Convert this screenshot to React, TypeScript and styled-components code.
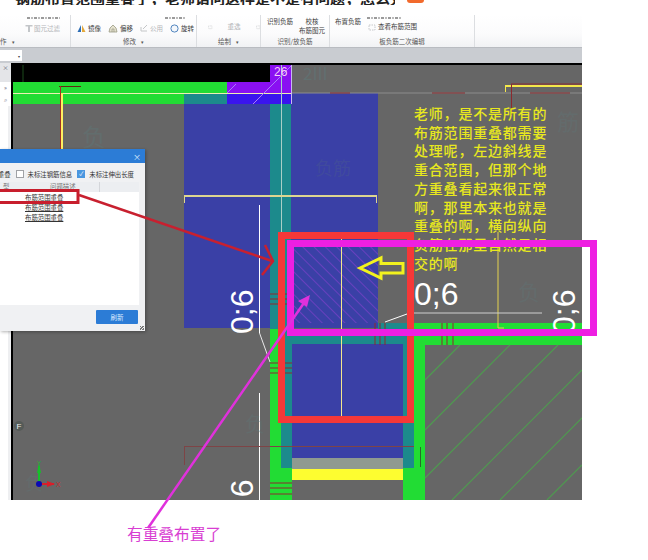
import * as React from "react";
import styled, { createGlobalStyle } from "styled-components";

const CJK = `"Noto Sans CJK SC", "Liberation Sans", sans-serif`;

const GlobalStyle = createGlobalStyle`
  html, body {
    margin: 0;
    background: #fff;
    font-family: ${CJK};
  }
`;

const Page = styled.div`
  position: relative;
  width: 648px;
  height: 560px;
  overflow: hidden;
  background: #fff;
`;

const TitleBar = styled.div`
  display: flex;
  height: 15px;
  padding-left: 15px;
  overflow: hidden;
`;

const TitleText = styled.div`
  width: 380px;
  height: 15px;
  margin-top: -10px;
  font-size: 15px;
  line-height: 15px;
  font-weight: 700;
  color: #222;
  white-space: nowrap;
  overflow: hidden;
`;

const TitleBadge = styled.div`
  width: 17px;
  height: 3px;
  margin-left: 12px;
  background: #f26a2c;
  border-radius: 0 0 4px 4px;
`;

const Ribbon = styled.div`
  display: flex;
  width: 582px;
  height: 32px;
  border-bottom: 1px solid #b9bcc1;
  background: linear-gradient(#fff, #fbfbfc 60%, #f1f2f4);
  font-size: 6.5px;
  line-height: 9px;
  color: #4a4a4a;
`;

const Group = styled.div<{ $w: number }>`
  display: flex;
  flex-direction: column;
  flex: none;
  width: ${(p) => p.$w}px;
  border-right: 1px solid #dcdee1;
  box-sizing: border-box;
`;

// the ribbon's upper tool row, scrolled almost out of view: only specks show
const CutRow = styled.div<{ $pl: number; $w: number }>`
  width: ${(p) => p.$w}px;
  height: 2px;
  margin: 2px 0 -4px ${(p) => p.$pl}px;
  background: repeating-linear-gradient(90deg, #9a9a9a 0 3px, transparent 3px 4px, #bbb 4px 6px, transparent 6px 7px);
`;

const GroupBody = styled.div<{ $pl: number; $gap?: number; $top?: number; $align?: string }>`
  display: flex;
  align-items: ${(p) => p.$align ?? "center"};
  gap: ${(p) => p.$gap ?? 6}px;
  height: 21px;
  padding: ${(p) => p.$top ?? 5}px 0 0 ${(p) => p.$pl}px;
  box-sizing: border-box;
`;

const GroupLabel = styled.div<{ $left?: boolean }>`
  height: 11px;
  text-align: ${(p) => (p.$left ? "left" : "center")};
  font-size: 6.5px;
  line-height: 10px;
  color: #555;
`;

const Caret = styled.span`
  margin-left: 5px;
  font-size: 5px;
`;

const Tool = styled.span<{ $off?: boolean; $drop?: number }>`
  display: inline-flex;
  align-items: center;
  gap: 2px;
  margin-top: ${(p) => p.$drop ?? 0}px;
  white-space: nowrap;
  color: ${(p) => (p.$off ? "#b3b5b8" : "#3f3f3f")};
`;

const ToolColumn = styled.div`
  display: flex;
  flex-direction: column;
  align-items: center;
`;

const ToolStrip = styled.div`
  width: 582px;
  height: 15px;
  padding-top: 2px;
  box-sizing: border-box;
  background: #c9ccd1;
`;

const StripField = styled.div`
  display: flex;
  align-items: center;
  justify-content: flex-end;
  width: 22px;
  height: 11px;
  padding-right: 2px;
  box-sizing: border-box;
  background: #fff;
  font-size: 4px;
  color: #444;
`;

const Workspace = styled.div`
  position: relative;
  display: flex;
  width: 582px;
  height: 437px;
`;

const SidePanel = styled.div`
  flex: none;
  width: 11px;
  height: 100%;
  border-right: 2px solid #000;
  background: linear-gradient(90deg, #fff 8px, #eeeff1 8px);
  color: #667;
`;

const SideHead = styled.div`
  height: 19px;
  background: #e4e5e8;
  font-size: 6px;
  line-height: 10px;
  text-align: center;
`;

const SideRow = styled.div`
  display: flex;
  justify-content: center;
  height: 12px;
  font-size: 6px;
  line-height: 12px;
  background: #fff;
`;

const Drawing = styled.svg`
  display: block;
  flex: none;
  font-family: "Liberation Sans", sans-serif;
`;

const Dialog = styled.div`
  position: absolute;
  left: 0;
  top: 86px;
  display: flex;
  flex-direction: column;
  width: 145px;
  height: 182px;
  background: #f0f1f3;
  box-shadow: 1px 1px 3px rgba(0, 0, 0, 0.3);
  font-size: 6.4px;
  line-height: 9px;
  color: #333;
`;

const DialogTitle = styled.div`
  display: flex;
  align-items: center;
  justify-content: flex-end;
  flex: none;
  height: 14px;
  padding-right: 4px;
  background: #2c7cd6;
  color: #dfeeff;
  font-size: 8px;
`;

const FilterRow = styled.div`
  display: flex;
  align-items: center;
  justify-content: flex-end;
  gap: 4px;
  flex: none;
  height: 19px;
  padding: 3px 11px 0 0;
  box-sizing: border-box;
  white-space: nowrap;
`;

const CheckBox = styled.span<{ $on?: boolean }>`
  display: inline-flex;
  align-items: center;
  justify-content: center;
  flex: none;
  width: 8px;
  height: 8px;
  margin-left: 1px;
  box-sizing: border-box;
  border: 1px solid ${(p) => (p.$on ? "#4a97e0" : "#a0a2a6")};
  background: ${(p) => (p.$on ? "#4a97e0" : "#fff")};
  color: #fff;
  font-size: 6px;
  line-height: 1;
`;

const GridTable = styled.div`
  flex: 1;
  margin-right: 6px;
  background: #fff;
  overflow: hidden;
`;

const GridRow = styled.div<{ $head?: boolean }>`
  display: grid;
  grid-template-columns: 22px 78px 1fr;
  height: 10px;
  background: ${(p) => (p.$head ? "#eceef1" : "#fff")};
  line-height: 10px;
  color: ${(p) => (p.$head ? "#777" : "#333")};
  text-decoration: ${(p) => (p.$head ? "none" : "underline")};
`;

const GridCell = styled.div<{ $head?: boolean }>`
  padding-left: ${(p) => (p.$head ? "28px" : "3px")};
  border-right: ${(p) => (p.$head ? "1px solid #d4d6da" : "none")};
  white-space: nowrap;
`;

const RowsSpacer = styled.div`
  height: 1px;
`;

const DialogFooter = styled.div`
  position: relative;
  display: flex;
  align-items: flex-start;
  justify-content: flex-end;
  flex: none;
  height: 26px;
  padding: 5px 7px 0 0;
  box-sizing: border-box;
`;

const PrimaryButton = styled.div`
  width: 42px;
  height: 14px;
  border-radius: 1px;
  background: #2c7cd6;
  color: #dcecff;
  font-size: 6.5px;
  line-height: 14px;
  text-align: center;
`;

const Grip = styled.span`
  position: absolute;
  right: 1px;
  bottom: 1px;
  width: 4px;
  height: 4px;
  background: repeating-linear-gradient(135deg, #777 0 1px, transparent 1px 2px);
`;

const Note = styled.div`
  position: absolute;
  left: 414px;
  top: 104px;
  width: 150px;
  font-size: 14px;
  font-weight: 500;
  line-height: 18.7px;
  letter-spacing: 0.8px;
  color: #e8e81e;
  white-space: nowrap;
`;

const Overlay = styled.svg`
  position: absolute;
  left: 0;
  top: 0;
  pointer-events: none;
`;

const Caption = styled.div`
  padding: 25px 0 0 127px;
  font-size: 15.7px;
  line-height: 18px;
  color: #d83ed2;
`;

const MirrorIcon = () => (
  <svg width="9" height="9" viewBox="0 0 9 9">
    <path d="M4 1 L4 8 L0.5 8 Z" fill="#2c6db5" />
    <path d="M5 1 L5 8 L8.5 8 Z" fill="#e3a83a" />
  </svg>
);

const OffsetIcon = () => (
  <svg width="10" height="9" viewBox="0 0 10 9">
    <path d="M1 8 L2 4 L5 1 L8 4 L9 8 Z" fill="#e5e2cf" stroke="#9a9a84" strokeWidth="0.8" />
    <path d="M4 8 L4 5 L6 5 L6 8" fill="none" stroke="#9a9a84" strokeWidth="0.7" />
  </svg>
);

const ShareIcon = () => (
  <svg width="8" height="8" viewBox="0 0 8 8">
    <path d="M1 7 L1 3 M1 7 L7 7 M3 5 L7 1" stroke="#c4c6c8" strokeWidth="1" fill="none" />
  </svg>
);

const RotateIcon = () => (
  <svg width="9" height="9" viewBox="0 0 9 9">
    <circle cx="4.5" cy="4.5" r="3.6" fill="#f4f7fb" stroke="#3f78b8" strokeWidth="0.9" />
  </svg>
);

const FilterIcon = () => (
  <svg width="8" height="9" viewBox="0 0 8 9">
    <path d="M0.5 1 H7.5 V2.6 H5 V8 H3 V2.6 H0.5 Z" fill="#c3c6c9" />
  </svg>
);

const DottedIcon = () => (
  <svg width="8" height="8" viewBox="0 0 8 8">
    <path d="M1 2 H7 V7 H1 Z" fill="none" stroke="#b9bbbe" strokeWidth="0.8" strokeDasharray="1.5 1" />
  </svg>
);

const GREEN = "#22dc34";
const BLUE = "#3a40a6";
const TEAL = "#1c8a8c";
const DARK_RED = "#8c2a2e";
const FAINT_RED = "#7e4446";

// [x, y, width, height, fill], painted in this order
const drawingBlocks: [number, number, number, number, string][] = [
  [13, 63, 569, 2, "#000"],
  [13, 65, 257, 17, "#000"],
  [13, 82, 214, 11, GREEN],
  [13, 93, 171, 11, GREEN],
  [184, 93, 194, 235, BLUE],
  [184, 93, 43, 11, TEAL],
  [270, 65, 21, 17, "#8a10f2"],
  [227, 82, 64, 11, "#8a10f2"],
  [227, 93, 64, 11, "#3a14ee"],
  [270, 104, 21, 225, TEAL],
  [270, 329, 11, 171, GREEN],
  [281, 329, 11, 139, TEAL],
  [281, 329, 133, 15, TEAL],
  [378, 323, 36, 21, TEAL],
  [403, 344, 11, 124, TEAL],
  [292, 344, 111, 114, BLUE],
  [292, 458, 111, 11, "#8f9a90"],
  [292, 469, 111, 11, "#fdfd30"],
  [414, 323, 168, 22, GREEN],
  [414, 345, 11, 123, GREEN],
  [403, 468, 22, 32, GREEN],
  [270, 468, 22, 32, GREEN],
];

// [x1, y1, x2, y2, colour, width]
const drawingLines: [number, number, number, number, string, number][] = [
  [23, 65, 23, 82, "#1c4a1c", 1],
  [13, 93.5, 291, 93.5, "#efeeb4", 1],
  [291, 93, 582, 93, "#8c8c8c", 1],
  [330, 93, 350, 93, DARK_RED, 1],
  [432, 93, 465, 93, DARK_RED, 1],
  [530, 93, 570, 93, DARK_RED, 1],
  [281.5, 65, 281.5, 329, "#a9cfc6", 1],
  [291.5, 65, 291.5, 104, "#c9b8f2", 1],
  [253, 104, 291, 66, "#a97cf8", 1],
  [227, 93, 236, 84, "#a97cf8", 1],
  [184, 196, 377, 196, "#ddd690", 2],
  [184.5, 196, 184.5, 203, "#ddd690", 1],
  [376.5, 196, 376.5, 203, "#ddd690", 1],
  [59, 86.5, 81, 86.5, "#5f2a10", 1],
  [60.5, 86, 60.5, 149, "#a03026", 1],
  [62, 93, 62, 149, "#fff060", 2],
  [505, 86, 582, 86, "#f4e84a", 2],
  [505.5, 86, 505.5, 92, "#f4e84a", 1],
  [511, 84, 582, 84, DARK_RED, 1],
  [511.5, 84, 511.5, 115, DARK_RED, 1],
  [259.5, 205, 259.5, 333, "#fff", 1],
  [259.5, 333, 270, 362, "#e8e8e8", 1],
  [259.5, 393, 259.5, 500, "#fff", 1],
  [341.5, 238, 341.5, 423, "#f2e68c", 1],
  [498, 232, 498, 328, "#e4d24e", 1],
  [498, 328, 504, 328, "#e4d24e", 1],
  [412, 313, 542, 313, "#cfcfcf", 1],
  [385, 322, 407, 314, "#fff", 1],
  [184.5, 447, 184.5, 465, FAINT_RED, 1],
  [184, 446.5, 414, 446.5, FAINT_RED, 1],
  [420.5, 447, 420.5, 467, "#2a6a2a", 1],
];

const tickRows = [294, 299, 304, 363, 368, 373, 483, 488, 494];
const tickColumns = [375, 380, 385, 442, 447, 453];
const hatchSums = [805, 855, 903, 952, 1000, 1047];

const noteLines = [
  "老师，是不是所有的",
  "布筋范围重叠都需要",
  "处理呢，左边斜线是",
  "重合范围，但那个地",
  "方重叠看起来很正常",
  "啊，那里本来也就是",
  "重叠的啊，横向纵向",
  "负筋在那里自然是相",
  "交的啊",
];

const ghostLabels: [number, number, string, number, number][] = [
  [303, 80, "2III", 17, 0.6],
  [82, 146, "负", 24, 0.45],
  [557, 130, "筋", 22, 0.35],
  [315, 175, "负筋", 18, 0.2],
  [518, 300, "负", 22, 0.35],
  [245, 432, "负", 20, 0.4],
  [25, 490, "负", 18, 0.35],
];

const CadDrawing = () => (
  <Drawing width="569" height="437" viewBox="13 63 569 437">
    <defs>
      <pattern id="overlap" width="8" height="8" patternUnits="userSpaceOnUse" patternTransform="rotate(45)">
        <line x1="0" y1="0" x2="8" y2="0" stroke="#8240cc" strokeWidth="1.3" />
      </pattern>
    </defs>
    <rect x="13" y="63" width="569" height="437" fill="#666" />
    {drawingBlocks.map(([x, y, w, h, fill], i) => (
      <rect key={i} x={x} y={y} width={w} height={h} fill={fill} />
    ))}
    <rect x="292" y="240" width="86" height="83" fill="url(#overlap)" />
    {hatchSums.map((c) => (
      <line
        key={c}
        x1={Math.max(425, c - 500)}
        y1={Math.min(500, c - 425)}
        x2={Math.min(582, c - 345)}
        y2={Math.max(345, c - 582)}
        stroke="#4f9a50"
        strokeWidth="1.2"
      />
    ))}
    {drawingLines.map(([x1, y1, x2, y2, color, width], i) => (
      <line key={i} x1={x1} y1={y1} x2={x2} y2={y2} stroke={color} strokeWidth={width} />
    ))}
    {tickRows.map((y) => (
      <line key={y} x1="270" y1={y} x2="292" y2={y} stroke={DARK_RED} strokeWidth="1" />
    ))}
    {tickColumns.map((x) => (
      <line key={x} x1={x} y1="323" x2={x} y2="345" stroke={DARK_RED} strokeWidth="1" />
    ))}
    {ghostLabels.map(([x, y, label, size, alpha]) => (
      <text key={x} x={x} y={y} fontSize={size} fill="#5f7778" fillOpacity={alpha} fontFamily={CJK}>
        {label}
      </text>
    ))}
    <text x="274" y="76" fontSize="12" fill="#f6cdf6">
      26
    </text>
    <text x="414" y="305" fontSize="32" fill="#fff">
      0;6
    </text>
    <text transform="translate(253 334) rotate(-90)" fontSize="32" fill="#fff">
      0;6
    </text>
    <text transform="translate(575 334) rotate(-90)" fontSize="32" fill="#fff">
      0;6
    </text>
    <text transform="translate(253 524) rotate(-90)" fontSize="32" fill="#fff">
      0;6
    </text>
    <circle cx="19" cy="426" r="5" fill="#555b58" />
    <text x="16.5" y="429" fontSize="8" fill="#eee">
      F
    </text>
    <line x1="39" y1="484" x2="39" y2="466" stroke="#16c02a" strokeWidth="2" />
    <path d="M37 473 L39 463 L41 473 Z" fill="#16c02a" />
    <line x1="39" y1="484" x2="54" y2="484" stroke="#d81f2a" strokeWidth="2" />
    <path d="M47 481 L55 484 L47 487 Z" fill="#d81f2a" />
    <circle cx="39" cy="484" r="3" fill="#0a0ab4" />
    <text x="37" y="465" fontSize="6" fill="#16c02a">
      Y
    </text>
    <text x="56" y="487" fontSize="7" fill="#c42a30">
      X
    </text>
  </Drawing>
);

const Annotations = () => (
  <Overlay width="648" height="560" viewBox="0 0 648 560">
    <rect x="-3" y="190.5" width="81" height="12" fill="none" stroke="#c81e2d" strokeWidth="3" />
    <line x1="79" y1="195" x2="272" y2="261" stroke="#c8202f" strokeWidth="2.5" />
    <path d="M265 245 L273 261 L262 275" fill="none" stroke="#c8202f" strokeWidth="2.5" />
    <rect x="281.5" y="235.5" width="129" height="184" fill="none" stroke="#f53838" strokeWidth="7" />
    <rect x="290.5" y="243.5" width="303" height="89" fill="none" stroke="#ee1fe2" strokeWidth="7" />
    <path
      d="M360 268 L381 258 L381 263.5 L403 263.5 L403 273 L381 273 L381 278 Z"
      fill="none"
      stroke="#f2f21e"
      strokeWidth="3"
    />
    <line x1="148" y1="528" x2="306" y2="300" stroke="#e031dc" strokeWidth="2.5" />
    <path d="M310 295 L298 301 L307 307 Z" fill="#e031dc" />
  </Overlay>
);

export default function App() {
  return (
    <Page>
      <GlobalStyle />
      <TitleBar>
        <TitleText>钢筋布置范围重叠了，老师请问这样是不是有问题，怎么处理</TitleText>
        <TitleBadge />
      </TitleBar>
      <Ribbon>
        <Group $w={71}>
          <CutRow $pl={27} $w={33} />
          <GroupBody $pl={25} $gap={1}>
            <FilterIcon />
            <Tool $off>图元过滤</Tool>
          </GroupBody>
          <GroupLabel $left>
            作<Caret>▾</Caret>
          </GroupLabel>
        </Group>
        <Group $w={126}>
          <CutRow $pl={94} $w={20} />
          <GroupBody $pl={6} $gap={7}>
            <Tool>
              <MirrorIcon />
              镜像
            </Tool>
            <Tool>
              <OffsetIcon />
              偏移
            </Tool>
            <Tool $off>
              <ShareIcon />
              公用
            </Tool>
            <Tool>
              <RotateIcon />
              旋转
            </Tool>
          </GroupBody>
          <GroupLabel>
            修改<Caret>▾</Caret>
          </GroupLabel>
        </Group>
        <Group $w={64}>
          <GroupBody $pl={11} $gap={15} $top={2}>
            <DottedIcon />
            <Tool $off>重选</Tool>
            <DottedIcon />
          </GroupBody>
          <GroupLabel>
            绘制<Caret>▾</Caret>
          </GroupLabel>
        </Group>
        <Group $w={69}>
          <GroupBody $pl={6} $gap={6} $top={2} $align="flex-start">
            <Tool>识别负筋</Tool>
            <ToolColumn>
              <Tool>校核</Tool>
              <Tool>布筋图元</Tool>
            </ToolColumn>
          </GroupBody>
          <GroupLabel>识别/放负筋</GroupLabel>
        </Group>
        <Group $w={145}>
          <CutRow $pl={37} $w={34} />
          <GroupBody $pl={5} $gap={7} $top={2} $align="flex-start">
            <Tool>布置负筋</Tool>
            <Tool $drop={5}>
              <DottedIcon />
              查看布筋范围
            </Tool>
          </GroupBody>
          <GroupLabel>板负筋二次编辑</GroupLabel>
        </Group>
      </Ribbon>
      <ToolStrip>
        <StripField>▾</StripField>
      </ToolStrip>
      <Workspace>
        <SidePanel>
          <SideHead>×</SideHead>
          <SideRow>»</SideRow>
          <SideRow>⌕</SideRow>
        </SidePanel>
        <CadDrawing />
        <Dialog>
          <DialogTitle>×</DialogTitle>
          <FilterRow>
            <span>重叠</span>
            <CheckBox />
            <span>未标注钢筋信息</span>
            <CheckBox $on>✓</CheckBox>
            <span>未标注伸出长度</span>
          </FilterRow>
          <GridTable>
            <GridRow $head>
              <GridCell>型</GridCell>
              <GridCell $head>问题描述</GridCell>
              <div />
            </GridRow>
            <RowsSpacer />
            {["布筋范围重叠", "布筋范围重叠", "布筋范围重叠"].map((text, i) => (
              <GridRow key={i}>
                <div />
                <GridCell>{text}</GridCell>
              </GridRow>
            ))}
          </GridTable>
          <DialogFooter>
            <PrimaryButton>刷新</PrimaryButton>
            <Grip />
          </DialogFooter>
        </Dialog>
      </Workspace>
      <Caption>有重叠布置了</Caption>
      <Note>
        {noteLines.map((line) => (
          <div key={line}>{line}</div>
        ))}
      </Note>
      <Annotations />
    </Page>
  );
}
